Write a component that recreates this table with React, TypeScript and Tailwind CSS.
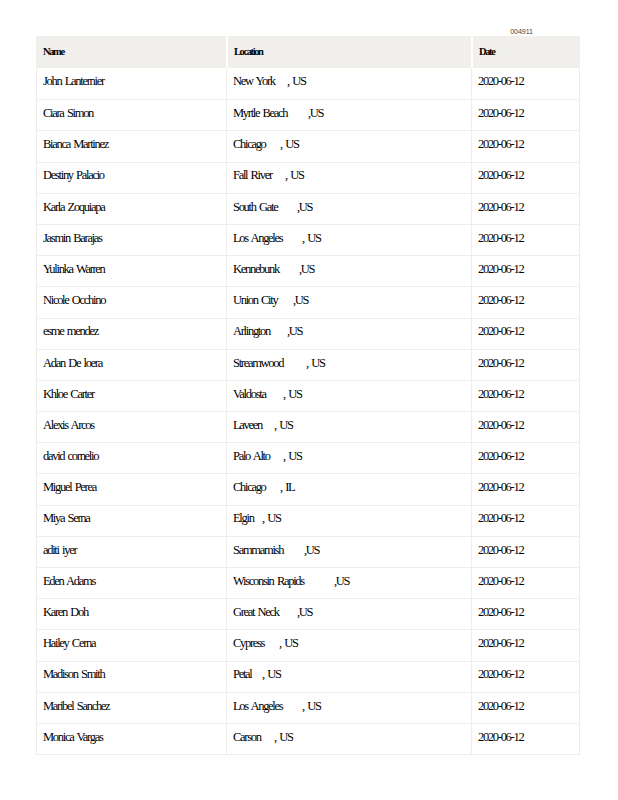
import React from "react";

// Each row: name, city, region, offset of the comma from the cell text start (px)
interface Row {
  name: string;
  city: string;
  region: string;
  commaAt: number;
  tight?: boolean; // ",US" without a space
}

const rows: Row[] = [
  { name: "John Lanternier", city: "New York", region: "US", commaAt: 54 },
  { name: "Ciara Simon", city: "Myrtle Beach", region: "US", commaAt: 75, tight: true },
  { name: "Bianca Martinez", city: "Chicago", region: "US", commaAt: 47 },
  { name: "Destiny Palacio", city: "Fall River", region: "US", commaAt: 52 },
  { name: "Karla Zoquiapa", city: "South Gate", region: "US", commaAt: 64, tight: true },
  { name: "Jasmin Barajas", city: "Los Angeles", region: "US", commaAt: 69 },
  { name: "Yulinka Warren", city: "Kennebunk", region: "US", commaAt: 66, tight: true },
  { name: "Nicole Occhino", city: "Union City", region: "US", commaAt: 60, tight: true },
  { name: "esme mendez", city: "Arlington", region: "US", commaAt: 54, tight: true },
  { name: "Adan De loera", city: "Streamwood", region: "US", commaAt: 73 },
  { name: "Khloe Carter", city: "Valdosta", region: "US", commaAt: 50 },
  { name: "Alexis Arcos", city: "Laveen", region: "US", commaAt: 41 },
  { name: "david cornelio", city: "Palo Alto", region: "US", commaAt: 50 },
  { name: "Miguel Perea", city: "Chicago", region: "IL", commaAt: 47 },
  { name: "Miya Serna", city: "Elgin", region: "US", commaAt: 29 },
  { name: "aditi iyer", city: "Sammamish", region: "US", commaAt: 71, tight: true },
  { name: "Eden Adams", city: "Wisconsin Rapids", region: "US", commaAt: 101, tight: true },
  { name: "Karen Doh", city: "Great Neck", region: "US", commaAt: 64, tight: true },
  { name: "Hailey Cerna", city: "Cypress", region: "US", commaAt: 46 },
  { name: "Madison Smith", city: "Petal", region: "US", commaAt: 29 },
  { name: "Maribel Sanchez", city: "Los Angeles", region: "US", commaAt: 69 },
  { name: "Monica Vargas", city: "Carson", region: "US", commaAt: 41 },
];

export default function App() {
  return (
    <div className="w-[618px] min-h-[800px] bg-white pt-[26px]">
      {/* document number */}
      <div className="flex justify-end pr-[85px] h-[10px] items-center">
        <span className="font-[family-name:Liberation_Sans,Arial,sans-serif] text-[7px] leading-none text-[#444]">
          004911
        </span>
      </div>

      <div className="ml-[36px] w-[544px] font-[family-name:Liberation_Serif,Times_New_Roman,serif] text-black">
        {/* Header */}
        <div className="grid grid-cols-[192px_245px_107px] h-[32px] bg-[#f0efeb] font-bold text-[10.5px] tracking-[-1.4px] leading-none">
          <div className="flex items-center pl-[7px] border-r-2 border-white">Name</div>
          <div className="flex items-center pl-[6px] border-r-2 border-white">Location</div>
          <div className="flex items-center pl-[6px]">Date</div>
        </div>

        {/* Body */}
        <div className="border-l border-r border-b border-[#eeede9]">
          {rows.map((r, i) => (
            <div
              key={i}
              className="grid grid-cols-[190px_245px_107px] h-[31.2px] border-t border-[#eeede9] text-[12.5px] tracking-[-1.3px] [word-spacing:1.5px] leading-none first:border-t-0"
            >
              <div className="flex items-center pl-[6px] pb-[4px] border-r border-[#eeede9] whitespace-pre">{r.name}</div>
              <div className="flex items-center pl-[6px] pb-[4px] border-r border-[#eeede9] whitespace-pre">
                <span className="inline-block" style={{ width: r.commaAt }}>
                  {r.city}
                </span>
                <span>{r.tight ? `,${r.region}` : `, ${r.region}`}</span>
              </div>
              <div className="flex items-center pl-[6px] pb-[4px]">2020-06-12</div>
            </div>
          ))}
        </div>
      </div>
    </div>
  );
}
